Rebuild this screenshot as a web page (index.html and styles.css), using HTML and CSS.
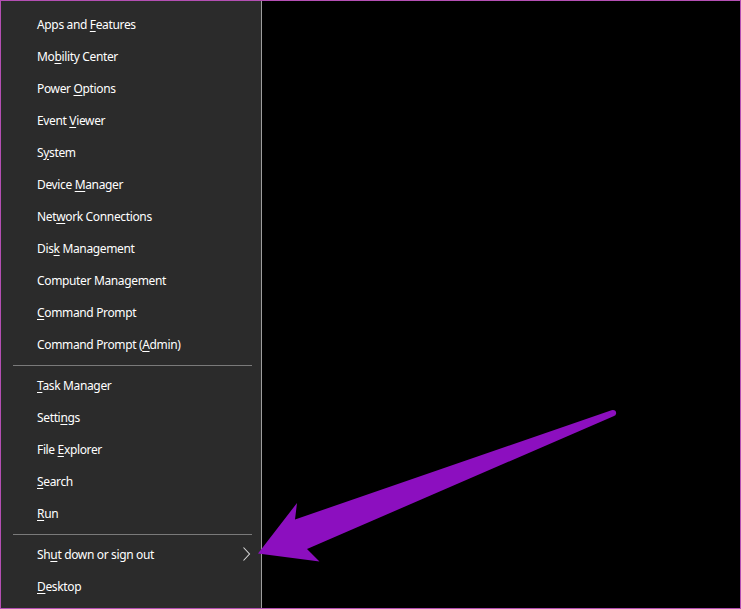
FILE: index.html
```html
<!DOCTYPE html>
<html>
<head>
<meta charset="utf-8">
<link rel="stylesheet" href="styles.css">
</head>
<body>
<div class="frame">
  <nav class="menu">
    <div class="item"><span class="label">Apps and <u>F</u>eatures</span></div>
    <div class="item"><span class="label">Mo<u>b</u>ility Center</span></div>
    <div class="item"><span class="label">Power <u>O</u>ptions</span></div>
    <div class="item"><span class="label">Event <u>V</u>iewer</span></div>
    <div class="item"><span class="label">S<u>y</u>stem</span></div>
    <div class="item"><span class="label">Device <u>M</u>anager</span></div>
    <div class="item"><span class="label">Net<u>w</u>ork Connections</span></div>
    <div class="item"><span class="label">Dis<u>k</u> Management</span></div>
    <div class="item"><span class="label">Computer Mana<u>g</u>ement</span></div>
    <div class="item"><span class="label"><u>C</u>ommand Prompt</span></div>
    <div class="item"><span class="label">Command Prompt (<u>A</u>dmin)</span></div>
    <div class="sep"></div>
    <div class="item"><span class="label"><u>T</u>ask Manager</span></div>
    <div class="item"><span class="label">Setti<u>n</u>gs</span></div>
    <div class="item"><span class="label">File <u>E</u>xplorer</span></div>
    <div class="item"><span class="label"><u>S</u>earch</span></div>
    <div class="item"><span class="label"><u>R</u>un</span></div>
    <div class="sep"></div>
    <div class="item sub"><span class="label">Sh<u>u</u>t down or sign out</span><svg class="chev" width="9" height="16" viewBox="0 0 9 16"><path d="M1.5 1.5 L7.5 8 L1.5 14.5" fill="none" stroke="#d8d8d8" stroke-width="1.1"/></svg></div>
    <div class="item"><span class="label"><u>D</u>esktop</span></div>
  </nav>
  <div class="desk"></div>
  <svg class="arrow" width="741" height="609" viewBox="0 0 741 609">
    <path d="M611.5 410.2 Q616 409.5 616.2 413.2 Q616 415.5 613.5 416.2 L307 549 L319.5 561.5 L258 553.5 L297 503 L295 519.5 Z" fill="#8c0fbf"/>
  </svg>
</div>
</body>
</html>
```
FILE: styles.css
```css
html, body {
  margin: 0;
  padding: 0;
  background: #000;
}
.frame {
  position: relative;
  box-sizing: border-box;
  width: 741px;
  height: 609px;
  border: 1px solid #b44fb3;
  display: flex;
  overflow: hidden;
}
.menu {
  width: 260px;
  flex: none;
  background: #2b2b2b;
  border-right: 1px solid #9d9d9d;
  padding-top: 7px;
  display: flex;
  flex-direction: column;
  font-family: "Noto Sans", "Open Sans", sans-serif;
  font-size: 12px;
  letter-spacing: -0.35px;
  color: #ffffff;
}
.item {
  height: 32px;
  display: flex;
  align-items: center;
  padding-left: 36px;
}
.label {
  white-space: nowrap;
}
.label u {
  text-decoration: underline;
  text-underline-offset: 2px;
  text-decoration-thickness: 1px;
}
.sub {
  padding-right: 10px;
}
.chev {
  margin-left: auto;
}
.sep {
  height: 1px;
  background: #7a7a7a;
  margin: 5px 9px 3px 12px;
}
.desk {
  flex: 1;
  background: #000;
}
.arrow {
  position: absolute;
  left: -1px;
  top: -1px;
  pointer-events: none;
}
```
